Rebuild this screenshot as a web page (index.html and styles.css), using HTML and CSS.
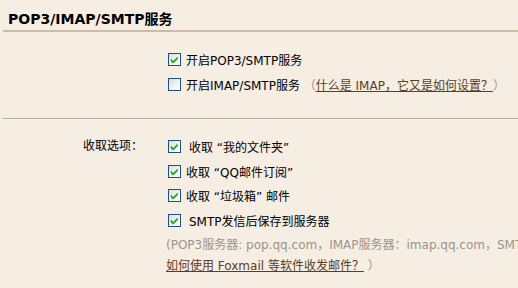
FILE: index.html
```html
<!DOCTYPE html>
<html>
<head>
<meta charset="utf-8">
<link rel="stylesheet" href="styles.css">
</head>
<body>
<div class="page">
  <h1 class="title">POP3/IMAP/SMTP服务</h1>
  <div class="section sec1">
    <div class="row">
      <span class="cb checked"><svg viewBox="0 0 13 13" width="13" height="13"><path d="M2.8 5.6 L5.2 8 L9.8 3.4 L9.8 6 L5.2 10.6 L2.8 8.2 Z" fill="#21a121"/></svg></span>
      <span class="lbl">开启POP3/SMTP服务</span>
    </div>
    <div class="row">
      <span class="cb"></span>
      <span class="lbl">开启IMAP/SMTP服务 <span class="paren">（</span><a class="link" href="#">什么是 IMAP，它又是如何设置？</a><span class="paren">）</span></span>
    </div>
  </div>
  <div class="sep"></div>
  <div class="section sec2">
    <div class="opts-label">收取选项：</div>
    <div class="opts">
      <div class="row">
        <span class="cb checked"><svg viewBox="0 0 13 13" width="13" height="13"><path d="M2.8 5.6 L5.2 8 L9.8 3.4 L9.8 6 L5.2 10.6 L2.8 8.2 Z" fill="#21a121"/></svg></span>
        <span class="lbl sp">收取 “我的文件夹”</span>
      </div>
      <div class="row">
        <span class="cb checked"><svg viewBox="0 0 13 13" width="13" height="13"><path d="M2.8 5.6 L5.2 8 L9.8 3.4 L9.8 6 L5.2 10.6 L2.8 8.2 Z" fill="#21a121"/></svg></span>
        <span class="lbl">收取 “QQ邮件订阅”</span>
      </div>
      <div class="row">
        <span class="cb checked"><svg viewBox="0 0 13 13" width="13" height="13"><path d="M2.8 5.6 L5.2 8 L9.8 3.4 L9.8 6 L5.2 10.6 L2.8 8.2 Z" fill="#21a121"/></svg></span>
        <span class="lbl">收取 “垃圾箱” 邮件</span>
      </div>
      <div class="row">
        <span class="cb checked"><svg viewBox="0 0 13 13" width="13" height="13"><path d="M2.8 5.6 L5.2 8 L9.8 3.4 L9.8 6 L5.2 10.6 L2.8 8.2 Z" fill="#21a121"/></svg></span>
        <span class="lbl sp">SMTP发信后保存到服务器</span>
      </div>
      <div class="note">(POP3服务器: pop.qq.com，IMAP服务器：imap.qq.com，SMTP服务器：smtp.qq.com)</div>
      <div class="note2"><a class="link" href="#">如何使用 Foxmail 等软件收发邮件？</a> <span class="paren">）</span></div>
    </div>
  </div>
</div>
</body>
</html>
```

FILE: styles.css
```css
html, body {
  margin: 0;
  padding: 0;
  background: #f6ede3;
  overflow: hidden;
}
body {
  width: 518px;
  height: 288px;
  font-family: "DejaVu Sans", Verdana, "Noto Sans CJK SC", sans-serif;
  font-size: 12px;
  color: #000;
}
.page {
  width: 518px;
  white-space: nowrap;
  overflow: hidden;
}
.title {
  margin: 0 0 0 3px;
  padding: 0 0 0 5px;
  height: 30px;
  line-height: 38px;
  font-size: 14px;
  font-weight: bold;
  color: #000;
  border-bottom: 2px solid #cbbca9;
}
.section {
  padding-left: 166px;
}
.sec1 {
  padding-top: 15px;
  padding-bottom: 21px;
}
.row {
  height: 25px;
  display: flex;
  align-items: center;
}
.cb {
  box-sizing: border-box;
  width: 13px;
  height: 13px;
  margin-left: 2px;
  border: 1px solid #1c5180;
  background: linear-gradient(135deg, #dcdcd6 0%, #f4f4f1 60%, #ffffff 100%);
  position: relative;
  flex: none;
}
.cb svg {
  position: absolute;
  left: -1px;
  top: -1px;
}
.lbl {
  margin-left: 5px;
}
.lbl.sp {
  margin-left: 8px;
}
.paren {
  color: #9a948d;
}
.link {
  color: #5b3d1d;
  text-decoration: underline;
}
.sep {
  margin-left: 2px;
  height: 1px;
  background: #b4aba0;
  border-bottom: 1px solid #fbf6ef;
}
.sec2 {
  display: grid;
  grid-template-columns: 83px 1fr;
  padding-left: 83px;
  padding-top: 14px;
}
.opts {
  min-width: 0;
  overflow: hidden;
}
.opts-label {
  height: 25px;
  line-height: 25px;
}
.opts .row {
  height: 24.7px;
}
.note {
  color: #9a948d;
  height: 22px;
  line-height: 24px;
}
.note2 {
  height: 22px;
  line-height: 22px;
}
```
